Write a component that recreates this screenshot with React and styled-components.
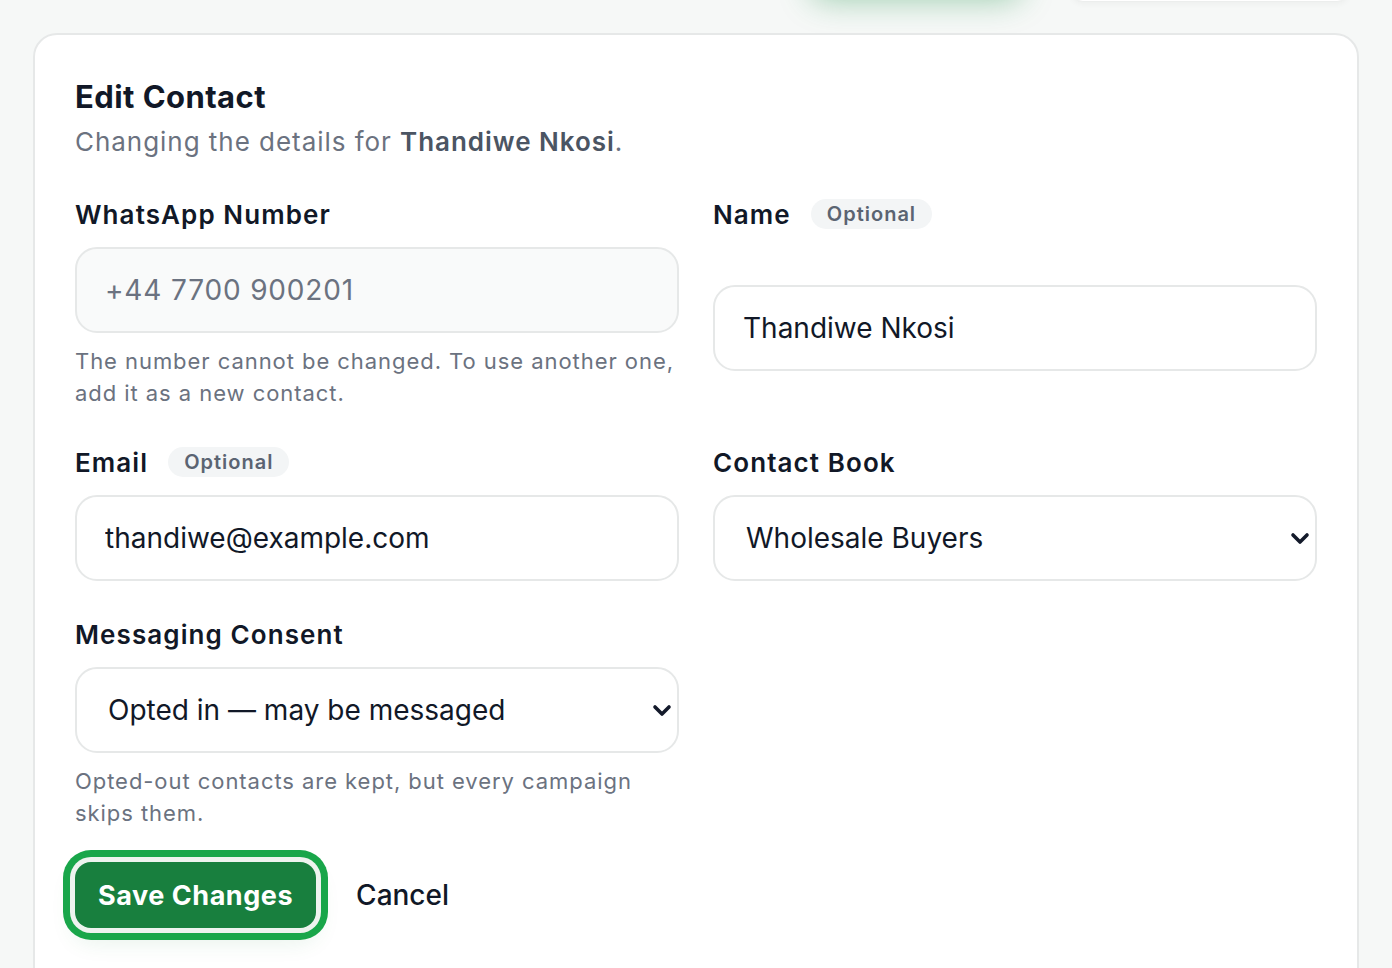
import React from 'react';
import styled, { createGlobalStyle } from 'styled-components';

const GlobalStyle = createGlobalStyle`
	* { box-sizing: border-box; }
	html, body { margin: 0; padding: 0; }
	body {
		background: #f6f8f7;
		font-family: Inter, "Noto Sans", "Liberation Sans", sans-serif;
		color: #111827;
		overflow: hidden;
	}
`;

const Page = styled.div`
	display: flex;
	flex-direction: column;
	gap: 31px;
	padding: 0 33px;
`;

const TopBar = styled.div`
	display: flex;
	justify-content: flex-end;
	align-items: flex-end;
	gap: 50px;
	height: 60px;
	margin-top: -58px;
	padding-right: 10px;
`;

const TopButton = styled.div`
	width: 210px;
	height: 50px;
	margin-bottom: 14px;
	border-radius: 14px;
	background: #178a40;
	box-shadow: 0 12px 32px rgba(22, 140, 64, 0.4);
`;

const TopPanel = styled.div`
	width: 278px;
	height: 60px;
	border-radius: 12px;
	background: #ffffff;
	border: 1px solid #eceeed;
	box-shadow: 0 2px 6px rgba(0, 0, 0, 0.04);
`;

const Card = styled.section`
	background: #ffffff;
	border: 2px solid #e6e8e8;
	border-radius: 24px;
	padding: 42px 40px 60px;
	min-height: 1000px;
`;

const Header = styled.header`
	display: flex;
	flex-direction: column;
	gap: 6px;
	margin-bottom: 36px;
`;

const Title = styled.h2`
	margin: 0;
	font-size: 31px;
	line-height: 40px;
	font-weight: 700;
	color: #111827;
	letter-spacing: 0.014em;
`;

const Subtitle = styled.p`
	margin: 0;
	font-size: 26px;
	line-height: 38px;
	color: #6b7280;
	letter-spacing: 0.037em;

	strong {
		font-weight: 600;
		color: #4b5563;
	}
`;

const FormGrid = styled.div`
	display: grid;
	grid-template-columns: 1fr 1fr;
	column-gap: 34px;
	row-gap: 36px;
`;

const Field = styled.div`
	display: flex;
	flex-direction: column;
	gap: 16px;
`;

const LabelRow = styled.div`
	display: flex;
	align-items: center;
	gap: 20px;
	height: 34px;
`;

const Label = styled.label`
	font-size: 26px;
	font-weight: 600;
	color: #111827;
	letter-spacing: 0.042em;
`;

const Badge = styled.span`
	display: inline-flex;
	align-items: center;
	height: 30px;
	padding: 0 16px;
	border-radius: 15px;
	background: #f3f5f6;
	color: #5b6472;
	font-size: 20px;
	font-weight: 600;
	letter-spacing: 0.05em;
`;

const Body = styled.div`
	flex: 1;
	display: flex;
	flex-direction: column;
	justify-content: center;
`;

const Input = styled.input`
	width: 100%;
	height: 86px;
	padding: 0 28px;
	border: 2px solid #e6e8e8;
	border-radius: 22px;
	background: ${(p) => (p.disabled ? '#f9fafa' : '#ffffff')};
	color: ${(p) => (p.disabled ? '#6b7280' : '#111827')};
	font-family: inherit;
	font-size: 28px;
	letter-spacing: ${(p) => (p.disabled ? '0.03em' : '0')};
	outline: none;
`;

const SelectWrap = styled.div`
	position: relative;
`;

const Select = styled.select`
	appearance: none;
	width: 100%;
	height: 86px;
	padding: 0 60px 0 31px;
	border: 2px solid #e6e8e8;
	border-radius: 22px;
	background: #ffffff;
	color: #111827;
	font-family: inherit;
	font-size: 28px;
	outline: none;
`;

const Chevron = styled.svg`
	position: absolute;
	right: 5px;
	top: 50%;
	width: 24px;
	height: 24px;
	transform: translateY(-50%);
	pointer-events: none;
`;

const Hint = styled.p`
	margin: 12px 0 0;
	font-size: 22px;
	line-height: 32px;
	color: #6b7280;
	letter-spacing: 0.043em;
`;

const Actions = styled.div`
	display: flex;
	align-items: center;
	gap: 40px;
	margin-top: 33px;
`;

const PrimaryButton = styled.button`
	height: 66px;
	padding: 0 23px;
	border: none;
	border-radius: 16px;
	background: #187f3e;
	color: #ffffff;
	font-family: inherit;
	font-size: 27px;
	font-weight: 700;
	letter-spacing: 0.02em;
	box-shadow: 0 0 0 5px #eef3ef, 0 0 0 12px #19a64a, 0 12px 24px rgba(22, 130, 60, 0.12);
	cursor: pointer;
`;

const TextButton = styled.button`
	padding: 0;
	border: none;
	background: none;
	color: #111827;
	font-family: inherit;
	font-size: 28px;
	font-weight: 500;
	cursor: pointer;
`;

const ChevronDown = () => (
	<Chevron viewBox="0 0 24 24" fill="none">
		<path d="M5 9l7 7 7-7" stroke="#141a2b" strokeWidth="3.6" strokeLinecap="round" strokeLinejoin="round" />
	</Chevron>
);

const SelectField = ({ value, options }) => (
	<SelectWrap>
		<Select defaultValue={value}>
			{options.map((o) => (
				<option key={o}>{o}</option>
			))}
		</Select>
		<ChevronDown />
	</SelectWrap>
);

export default function App() {
	return (
		<>
			<GlobalStyle />
			<Page>
				<TopBar>
					<TopButton />
					<TopPanel />
				</TopBar>
				<Card>
					<Header>
						<Title>Edit Contact</Title>
						<Subtitle>
							Changing the details for <strong>Thandiwe Nkosi</strong>.
						</Subtitle>
					</Header>
					<FormGrid>
						<Field>
							<LabelRow>
								<Label>WhatsApp Number</Label>
							</LabelRow>
							<Body>
								<Input disabled defaultValue="+44 7700 900201" />
								<Hint>The number cannot be changed. To use another one, add it as a new contact.</Hint>
							</Body>
						</Field>
						<Field>
							<LabelRow>
								<Label>Name</Label>
								<Badge>Optional</Badge>
							</LabelRow>
							<Body>
								<Input defaultValue="Thandiwe Nkosi" />
							</Body>
						</Field>
						<Field>
							<LabelRow>
								<Label>Email</Label>
								<Badge>Optional</Badge>
							</LabelRow>
							<Body>
								<Input defaultValue="thandiwe@example.com" />
							</Body>
						</Field>
						<Field>
							<LabelRow>
								<Label>Contact Book</Label>
							</LabelRow>
							<Body>
								<SelectField value="Wholesale Buyers" options={['Wholesale Buyers', 'Retail Customers', 'VIP']} />
							</Body>
						</Field>
						<Field>
							<LabelRow>
								<Label>Messaging Consent</Label>
							</LabelRow>
							<Body>
								<SelectField
									value="Opted in — may be messaged"
									options={['Opted in — may be messaged', 'Opted out — do not message']}
								/>
								<Hint>Opted-out contacts are kept, but every campaign skips them.</Hint>
							</Body>
						</Field>
					</FormGrid>
					<Actions>
						<PrimaryButton>Save Changes</PrimaryButton>
						<TextButton>Cancel</TextButton>
					</Actions>
				</Card>
			</Page>
		</>
	);
}
